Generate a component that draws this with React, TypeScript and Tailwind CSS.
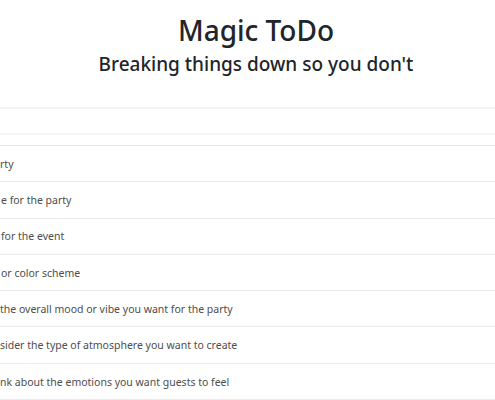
const rows = [
  { text: "rty", x: 0 },
  { text: "e for the party", x: 1 },
  { text: "for the event", x: 1 },
  { text: "or color scheme", x: 1 },
  { text: "the overall mood or vibe you want for the party", x: 0 },
  { text: "sider the type of atmosphere you want to create", x: 0 },
  { text: "nk about the emotions you want guests to feel", x: 0 },
];

export default function App() {
  return (
    <div
      className="w-[495px] h-[400px] overflow-hidden bg-white text-[#212529]"
      style={{ fontFamily: '"Noto Sans", "Open Sans", sans-serif' }}
    >
      <div className="pl-[17px] pt-[12px] text-center">
        <h1 className="text-[28px] leading-[36px] font-medium">Magic ToDo</h1>
        <h2 className="mt-[3px] text-[19px] leading-[26px] font-medium">Breaking things down so you don't</h2>
      </div>

      <div className="mt-[30px] h-[28px] border-y-2 border-[#f4f4f4]" />

      <ul className="mt-[10px] border-t border-[#e6e6e6]">
        {rows.map((r) => (
          <li
            key={r.text}
            className="h-[36.3px] flex items-center pt-[2px] border-b border-[#ebebeb] text-[10.5px] text-[#4d4d4d]"
          >
            <span style={{ marginLeft: r.x }}>{r.text}</span>
          </li>
        ))}
      </ul>
    </div>
  );
}
